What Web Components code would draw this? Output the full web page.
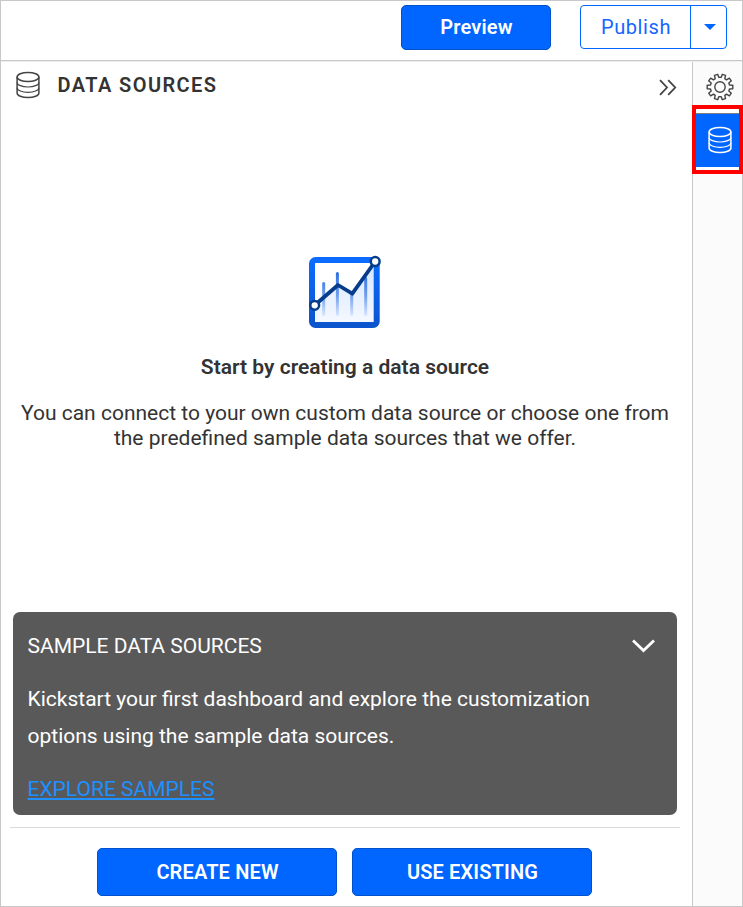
<!DOCTYPE html>
<html lang="en">
<head>
<meta charset="utf-8">
<title>Data Sources</title>
<style>
html,body{margin:0;height:100%;overflow:hidden}
body{font-family:Roboto,"Liberation Sans",sans-serif;color:#333;background:#fff}
</style>
</head>
<body>
<dashboard-frame>
  <top-bar slot="top">
    <action-button style="--w:150px;--h:45px;--ls:.15px;--pb:2px">Preview</action-button>
    <split-button>Publish</split-button>
  </top-bar>
  <data-panel>
    <panel-header slot="header">DATA SOURCES</panel-header>
    <empty-state heading="Start by creating a data source">You can connect to your own custom data source or choose one from the predefined sample data sources that we offer.</empty-state>
    <sample-card heading="SAMPLE DATA SOURCES" link="EXPLORE SAMPLES">Kickstart your first dashboard and explore the customization options using the sample data sources.</sample-card>
    <action-button slot="actions">CREATE NEW</action-button>
    <action-button slot="actions">USE EXISTING</action-button>
  </data-panel>
  <side-rail slot="rail"></side-rail>
</dashboard-frame>
<script>
const define = (name, html, setup) => {
  const tpl = document.createElement('template');
  tpl.innerHTML = html;
  customElements.define(name, class extends HTMLElement {
    constructor() {
      super();
      this.attachShadow({mode: 'open'}).append(tpl.content.cloneNode(true));
      if (setup) setup(this, this.shadowRoot);
    }
  });
};

define('db-icon', `<style>:host{display:block;width:24px;height:28px;color:#444}svg{display:block}</style>
<svg width="24" height="28" viewBox="0 0 24 28" fill="none" stroke="currentColor" stroke-width="1.5">
<ellipse cx="12" cy="6" rx="10.9" ry="4.6"/>
<path d="M1.1 6V22C1.1 24.6 6 26.6 12 26.6S22.9 24.6 22.9 22V6"/>
<path stroke-width="1.2" d="M1.1 11.4C1.1 14 6 16 12 16S22.9 14 22.9 11.4M1.1 16.7C1.1 19.3 6 21.3 12 21.3S22.9 19.3 22.9 16.7"/></svg>`);

define('gear-icon', `<style>:host{display:block;width:28px;height:28px;color:#444}svg{display:block}</style>
<svg width="28" height="28" viewBox="-14 -14 28 28" fill="none" stroke="currentColor" stroke-width="1.4" stroke-linejoin="round"><circle r="5.2"/><path/></svg>`, (el, root) => {
  const teeth = 10, pts = [];
  for (let i = 0; i < teeth; i++) {
    const mid = i * 360 / teeth;
    for (const [r, a] of [[9.7, -11.5], [12.9, -7.5], [12.9, 7.5], [9.7, 11.5]]) {
      const t = (mid + a) * Math.PI / 180;
      pts.push((r * Math.cos(t)).toFixed(2) + ' ' + (r * Math.sin(t)).toFixed(2));
    }
  }
  root.querySelector('path').setAttribute('d', 'M' + pts.join('L') + 'Z');
});

define('action-button', `<style>:host{display:block}
button{display:flex;align-items:center;justify-content:center;box-sizing:border-box;width:var(--w,240px);height:var(--h,48px);padding:0 0 var(--pb,0) 1px;border:1px solid #0052cc;border-radius:5px;background:#06f;color:#fff;font:600 20px/24px Roboto,"Liberation Sans",sans-serif;letter-spacing:var(--ls,.15px)}</style>
<button><slot></slot></button>`);

define('split-button', `<style>:host{display:flex;box-sizing:border-box;width:147px;height:44px;border:1px solid #06f;border-radius:4px;background:#fff;color:#1565ff;overflow:hidden}
button{display:flex;align-items:center;justify-content:center;border:0;padding:0;background:none;color:inherit;font:400 20px/24px Roboto,"Liberation Sans",sans-serif;letter-spacing:.6px}
.main{width:109px;padding-left:1px}.more{flex:1;padding-left:2px;border-left:1px solid #06f}</style>
<button class="main"><slot></slot></button>
<button class="more" aria-label="More"><svg width="12" height="6" viewBox="0 0 12 6"><path d="M0 0H12L6 6Z" fill="#06f"/></svg></button>`);

define('top-bar', `<style>:host{display:flex;align-items:flex-start;justify-content:flex-end;gap:29px;box-sizing:border-box;height:60px;padding:4px 15px 0 0;border-bottom:1px solid #c8c8c8;box-shadow:0 1px #eee}</style><slot></slot>`);

define('dashboard-frame', `<style>:host{display:grid;grid-template:60px 1fr/1fr 50px;box-sizing:border-box;width:743px;height:907px;border:1px solid #c8c8c8}
.top{grid-column:1/3}</style>
<div class="top"><slot name="top"></slot></div><slot></slot><slot name="rail"></slot>`);

define('panel-header', `<style>:host{display:flex;align-items:center;height:50px;padding:0 15px 0 14.5px;font:600 20px/24px Roboto,"Liberation Sans",sans-serif;letter-spacing:1.4px}
span{flex:1;margin-left:18px;padding-bottom:2px}
svg{margin-top:2px}db-icon{margin-bottom:2px}</style>
<db-icon></db-icon><span><slot></slot></span>
<svg width="18" height="17" viewBox="0 0 18 17" fill="none" stroke="#444" stroke-width="1.8"><path d="M1 1.2L8 8.5L1 15.8M9.2 1.2L16.2 8.5L9.2 15.8"/></svg>`);

define('empty-state', `<style>:host{display:flex;flex-direction:column;align-items:center;flex:1;padding:142px 3px 0 0;text-align:center}
h2{margin:25px 0 0;font:600 21px/25px Roboto,"Liberation Sans",sans-serif}
p{width:660px;margin:21px 0 0;font-size:21px;line-height:25px}svg{display:block}</style>
<svg width="76" height="77" viewBox="307 253 76 77" fill="none">
<defs><linearGradient id="f" x1="0" y1="0" x2="0" y2="1"><stop offset="0" stop-color="#0b6cff"/><stop offset="1" stop-color="#0b55cf"/></linearGradient>
<linearGradient id="a" gradientUnits="userSpaceOnUse" x1="0" y1="265" x2="0" y2="322"><stop offset="0" stop-color="#d9e7ff"/><stop offset="1" stop-color="#f4f8ff"/></linearGradient>
<linearGradient id="b" gradientUnits="userSpaceOnUse" x1="0" y1="272" x2="0" y2="317"><stop offset="0" stop-color="#2d6fe0"/><stop offset=".5" stop-color="#6c9cec"/><stop offset="1" stop-color="#dfeaff"/></linearGradient></defs>
<path d="M315 305L338 285L352.3 293.7L375 262V322H315Z" fill="url(#a)"/>
<g fill="url(#b)"><rect x="322.2" y="282" width="3" height="34" rx="1.5"/><rect x="335.9" y="272" width="3" height="44" rx="1.5"/><rect x="350.2" y="292" width="3" height="24" rx="1.5"/><rect x="364.2" y="277" width="3" height="39" rx="1.5"/></g>
<rect x="312" y="260" width="64.7" height="65" rx="3.5" stroke="url(#f)" stroke-width="6"/>
<path d="M314.7 305.3L338 285L352.3 293.7L375.2 261.5" stroke="#073c8c" stroke-width="3.8" stroke-linejoin="round"/>
<circle cx="314.7" cy="305.3" r="4.4" fill="#fff" stroke="#073c8c" stroke-width="2.5"/><circle cx="375.2" cy="261.5" r="4.4" fill="#fff" stroke="#073c8c" stroke-width="2.5"/></svg>
<h2></h2><p><slot></slot></p>`);

define('sample-card', `<style>:host{display:block;box-sizing:border-box;height:203px;margin:0 15px 0 12px;padding:22px 22px 0 14.5px;border-radius:7px;background:#595959;color:#fff;font-size:21px}
header{display:flex;justify-content:space-between;align-items:center;height:24px}
p{width:600px;margin:23px 0 0;line-height:37px}
a{display:block;width:max-content;margin-top:21px;line-height:26px;color:#1e90ff;text-decoration:underline;text-decoration-thickness:2px;text-underline-offset:2px;text-decoration-skip-ink:none}</style>
<header><span></span><svg width="23" height="14" viewBox="0 0 23 14" fill="none" stroke="#fff" stroke-width="2.8"><path d="M1 1.6L11.5 11.6L22 1.6"/></svg></header>
<p><slot></slot></p><a></a>`);

for (const [tag, map] of [['empty-state', {heading: 'h2'}], ['sample-card', {heading: 'header span', link: 'a'}]])
  for (const el of document.querySelectorAll(tag))
    for (const [attr, sel] of Object.entries(map)) el.shadowRoot.querySelector(sel).textContent = el.getAttribute(attr);

define('data-panel', `<style>:host{display:flex;flex-direction:column;min-width:0}
footer{display:flex;justify-content:center;gap:15px;box-sizing:border-box;height:79px;margin:12px 12px 0 9px;padding:20px 1px 0 0;border-top:1px solid #d9d9d9}</style>
<slot name="header"></slot><slot></slot><footer><slot name="actions"></slot></footer>`);

define('side-rail', `<style>:host{display:flex;flex-direction:column;margin-top:1px;border-left:1px solid #c8c8c8;background:#fbfbfb}
gear-icon{margin:11px 0 0 13px}
.hl{box-sizing:border-box;width:51px;height:69px;margin:4px 0 0 -1px;padding:4px 0 3px;border:4px solid #f00;background:#fff}
.active{display:flex;align-items:center;box-sizing:border-box;height:54px;padding:0 0 1px 12px;border-top:1px solid #807e7e;background:#06f}
db-icon{color:#fff}</style>
<gear-icon></gear-icon><div class="hl"><div class="active"><db-icon></db-icon></div></div>`);
</script>
</body>
</html>
